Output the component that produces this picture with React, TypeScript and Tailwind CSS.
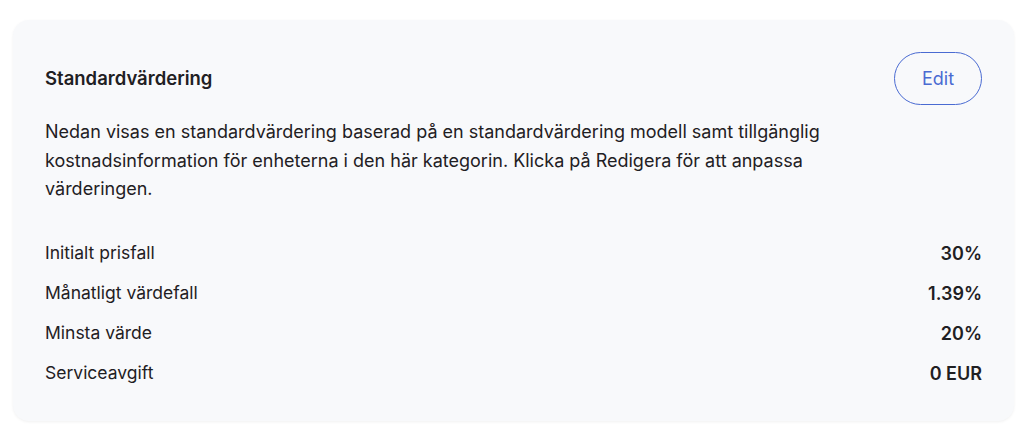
export default function App() {
  const rows = [
    { label: "Initialt prisfall", value: "30%" },
    { label: "Månatligt värdefall", value: "1.39%" },
    { label: "Minsta värde", value: "20%" },
    { label: "Serviceavgift", value: "0 EUR" },
  ];

  return (
    <div className="min-h-[438px] bg-white pl-[13px] pt-5 font-['Inter',sans-serif] text-[#1f2023]">
      <div className="w-[1001px] rounded-2xl bg-[#f8f9fb] px-8 pt-8 pb-[27px] shadow-[0_1px_3px_rgba(0,0,0,0.06)]">
        <div className="flex items-center justify-between">
          <h2 className="text-[18.5px] font-semibold">Standardvärdering</h2>
          <button className="flex h-[53px] w-[88px] items-center justify-center rounded-full border border-[#4a6bd2] text-[18px] text-[#4a6bd2]">
            Edit
          </button>
        </div>

        <p className="mt-[13px] max-w-[830px] text-[18px] leading-[28.5px]">
          Nedan visas en standardvärdering baserad på en standardvärdering modell samt tillgänglig
          kostnadsinformation för enheterna i den här kategorin. Klicka på Redigera för att anpassa
          värderingen.
        </p>

        <div className="mt-[30px] flex flex-col">
          {rows.map((r) => (
            <div key={r.label} className="flex h-10 items-center justify-between">
              <span className="text-[17.5px]">{r.label}</span>
              <span className="text-[18px] font-semibold">{r.value}</span>
            </div>
          ))}
        </div>
      </div>
    </div>
  );
}
